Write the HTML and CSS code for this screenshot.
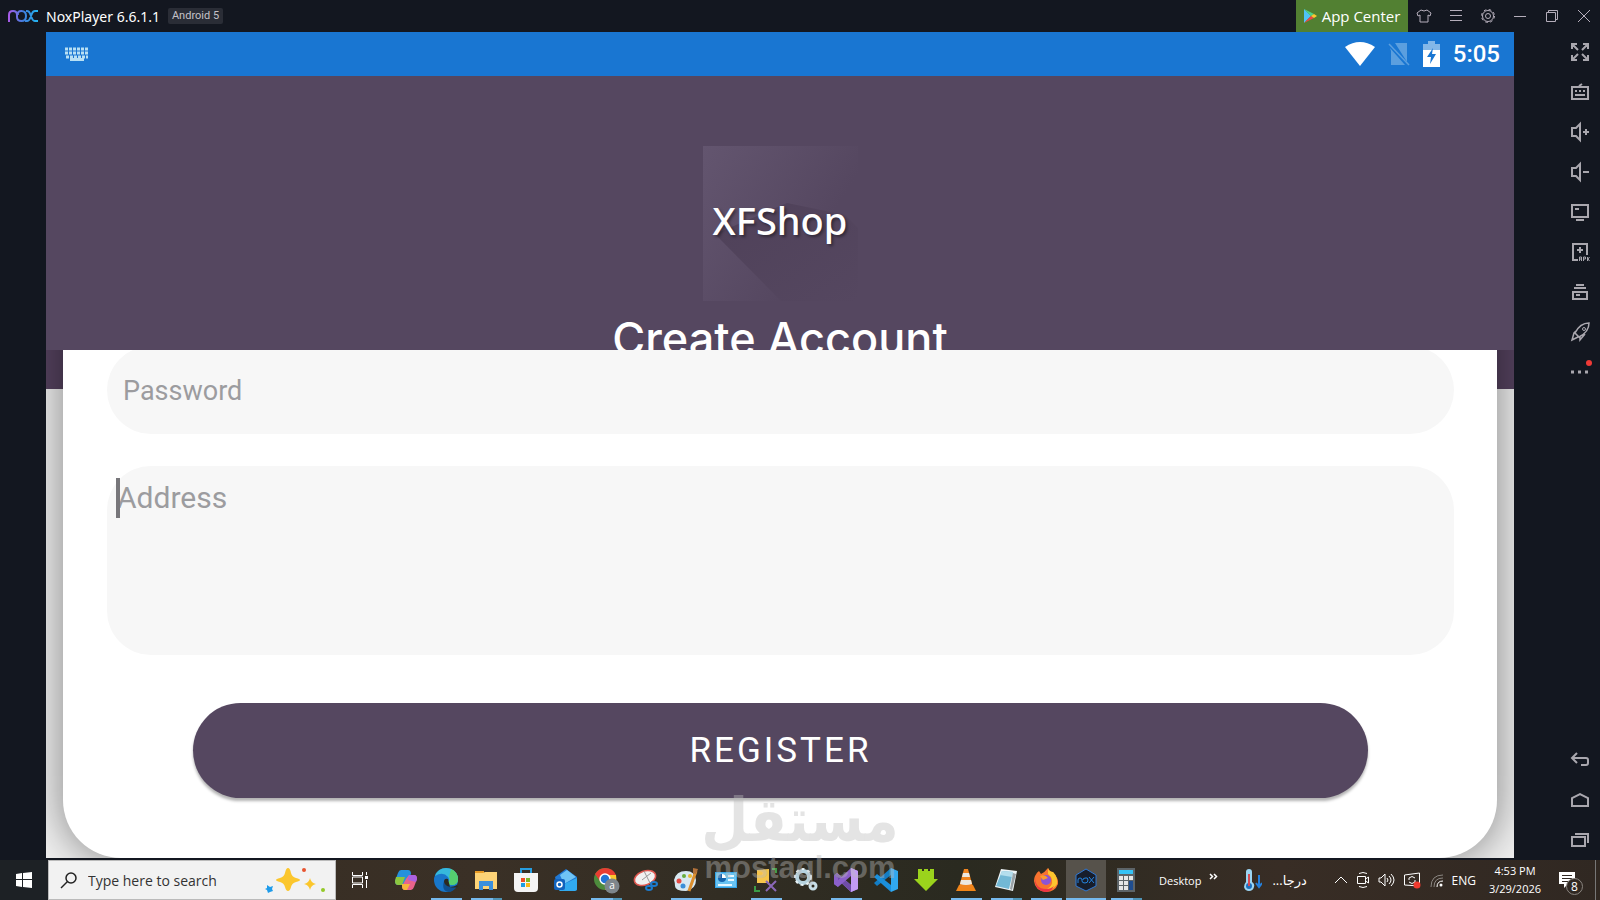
FILE: index.html
```
<!DOCTYPE html>
<html lang="en">
<head>
    <meta charset="UTF-8">
    <meta name="viewport" content="width=device-width, initial-scale=1.0">
    <title>NoxPlayer</title>
    <link rel="stylesheet" href="styles.css">
</head>
<body>
    <header class="titlebar">
        <svg class="nox-logo" width="30" height="12" viewBox="0 0 30 12">
            <defs>
                <linearGradient id="nox" x1="0" x2="1"><stop offset="0" stop-color="#a75be8"/><stop offset=".5" stop-color="#3f7fdd"/><stop offset="1" stop-color="#23b5f0"/></linearGradient>
            </defs>
            <path d="M1 12V5q0-4 4-4t4 4v2q0 4 4.500 4T18 6t-4.500-5T10 5M18 1h1q2 0 3 2.500l2 5q1 2.500 3 2.500h3M30 1h-3q-2 0-3 2.500l-2 5q-1 2.500-3 2.500h-2" fill="none" stroke="url(#nox)" stroke-width="2"/>
        </svg>
        <span class="app-name">NoxPlayer 6.6.1.1</span>
        <span class="version">Android 5</span>
        <button class="app-center">
            <svg width="13" height="14" viewBox="0 0 13 14"><path d="M0 0v14l7-7z" fill="#4fc3f7"/><path d="M0 0l10 5-3 2z" fill="#4cd38a"/><path d="M0 14l10-5-3-2z" fill="#ef4444"/><path d="M10 5l3 2-3 2-3-2z" fill="#fdc82f"/></svg>
            App Center
        </button>
        <button class="win-btn" aria-label="Theme"><svg width="16" height="14" viewBox="0 0 16 14"><path d="M5 1L1 4l1 3 2-1v7h8V6l2 1 1-3-4-3q-3 2-6 0z"/></svg></button>
        <button class="win-btn" aria-label="Menu"><svg width="12" height="12" viewBox="0 0 12 12"><path d="M0 .5h12M0 5.500h12M0 10.500h12"/></svg></button>
        <button class="win-btn" aria-label="Settings"><svg width="16" height="16" viewBox="0 0 16 16"><circle cx="8" cy="8" r="5.500"/><circle cx="8" cy="8" r="2.500"/><circle cx="8" cy="8" r="6.500" stroke-dasharray="2.600 2.500"/></svg></button>
        <button class="win-btn" aria-label="Minimize"><svg width="12" height="12" viewBox="0 0 12 12"><path d="M0 6.500h12"/></svg></button>
        <button class="win-btn" aria-label="Restore"><svg width="12" height="12" viewBox="0 0 12 12"><path d="M.5 2.500h9v9h-9zM2.500 2.500v-2h9v9h-2"/></svg></button>
        <button class="win-btn" aria-label="Close"><svg width="12" height="12" viewBox="0 0 12 12"><path d="M0 0l12 12M12 0L0 12"/></svg></button>
    </header>

    <div class="emulator">
        <main class="screen">
            <div class="status-bar">
                <svg width="26" height="14" viewBox="0 0 26 14" stroke="#b8e0f4" fill="none"><path d="M1 2h24M1 6h24M2 10h22" stroke-width="3" stroke-dasharray="3 1"/><path d="M6 12.500h14" stroke-width="3"/></svg>
                <div class="status-icons">
                    <svg width="30" height="24" viewBox="0 0 30 24"><path d="M0 5q15-10 30 0L15 24z" fill="#fff"/></svg>
                    <svg width="22" height="24" viewBox="0 0 22 24"><path d="M7 1h12v19zM2 6l15 17H3V9z" fill="#5b9fdf"/><path d="M1 2l20 21" stroke="#5b9fdf" stroke-width="1.500"/></svg>
                    <svg width="17" height="26" viewBox="0 0 17 26"><path d="M0 3h5V0h7v3h5v6H0z" fill="#83b7e8"/><path d="M0 9h17v17H0z" fill="#fff"/><path d="M10 7l-6 9h4l-1 7 6-10H9z" fill="#1976d2"/></svg>
                    <span class="time">5:05</span>
                </div>
            </div>
            <section class="hero">
                <div class="logo">
                    <svg width="155" height="155" viewBox="0 0 155 155">
                        <defs>
                            <linearGradient id="tile" x1="0" y1="0" x2=".8" y2=".5"><stop offset="0" stop-color="#63556f"/><stop offset="1" stop-color="#554760"/></linearGradient>
                            <linearGradient id="cast" x1="0" y1="0" x2="1" y2="1"><stop offset="0" stop-color="#4f4159"/><stop offset="1" stop-color="#554760"/></linearGradient>
                        </defs>
                        <path d="M0 0h155v155H0z" fill="url(#tile)"/>
                        <path d="M12 88L84 57l58 12 13 13v73H78z" fill="url(#cast)"/>
                    </svg>
                    <span class="logo-text">XFShop</span>
                </div>
                <h1>Create Account</h1>
            </section>
            <div class="form-area">
                <form class="card">
                    <input type="password" class="field" placeholder="Password" aria-label="Password">
                    <div class="address-wrap">
                        <textarea class="field address" placeholder="Address" aria-label="Address"></textarea>
                        <span class="caret"></span>
                    </div>
                    <button type="button" class="register">REGISTER</button>
                </form>
            </div>
        </main>

        <aside class="tools">
            <button aria-label="Full screen"><svg viewBox="0 0 18 18"><path d="M7 7L1 1M1 6V1h5M11 7l6-6M12 1h5v5M7 11l-6 6M1 12v5h5M11 11l6 6M17 12v5h-5"/></svg></button>
            <button aria-label="Keyboard"><svg viewBox="0 0 18 18"><path d="M1 4h16v12H1zM4 8h2M8 8h2M12 8h2M4 12h10M8 3l3-2"/></svg></button>
            <button aria-label="Volume up"><svg viewBox="0 0 18 18"><path d="M1 5h4l4-4v16l-4-4H1zM12 9h6M15 6v6"/></svg></button>
            <button aria-label="Volume down"><svg viewBox="0 0 18 18"><path d="M1 5h4l4-4v16l-4-4H1zM12 9h6"/></svg></button>
            <button aria-label="Screen"><svg viewBox="0 0 18 18"><path d="M1 2h16v12H1zM4 6h4M5 17h8"/></svg></button>
            <button aria-label="Install APK"><svg viewBox="0 0 18 18"><path d="M7 17H2V1h14v11M9 4v6M6 7h6"/><path d="M8.500 18v-4h2v4M8.500 16h2M12.500 18v-4h2v2h-2M16.500 14v4M18.500 14l-1.500 2 1.500 2" stroke-width="1"/></svg></button>
            <button aria-label="Multi window"><svg viewBox="0 0 18 18"><path d="M5 2h8M3 5h12M2 9h14v7H2zM5 12h4"/></svg></button>
            <button aria-label="Boost"><svg viewBox="0 0 18 18"><path d="M18 0q-9 0-14 10l4 4Q18 9 18 0zM5 8L3 10l-2 7 6-3M9 14v3l5-6" stroke-width="1.500"/><circle cx="13" cy="6" r="1.500" stroke-width="1"/></svg></button>
            <button aria-label="More" class="more"><svg viewBox="0 0 18 18"><path d="M0 9h3M7 9h3M14 9h3" stroke-width="3"/></svg></button>
            <button aria-label="Back" class="nav-back"><svg viewBox="0 0 18 18"><path d="M6 2L1 7l5 5M1 7h14q2 0 2 2v3q0 2-2 2h-5"/></svg></button>
            <button aria-label="Home"><svg viewBox="0 0 18 18"><path d="M1 15V7l8-4 8 4v8z"/></svg></button>
            <button aria-label="Recents"><svg viewBox="0 0 18 18"><path d="M1 6h13v9H1zM4 3h13v9"/></svg></button>
        </aside>
    </div>

    <footer class="taskbar">
        <button class="start" aria-label="Start"><svg width="16" height="16" viewBox="0 0 16 16" fill="#fff"><path d="M0 2l6-1v6H0zM7 1l9-1v7H7zM0 8h6v7l-6-1zM7 8h9v8l-9-1z"/></svg></button>
        <label class="search">
            <svg width="17" height="17" viewBox="0 0 17 17" fill="none" stroke="#222" stroke-width="1.500"><circle cx="11" cy="6" r="5"/><path d="M7.500 9.500L1 16"/></svg>
            <input type="text" placeholder="Type here to search">
            <svg width="62" height="26" viewBox="0 0 62 26"><path d="M24 1q2 0 3 5 1 4 5 5 4 1 4 2t-4 2q-4 1-5 5-1 4-3 4t-3-4q-1-4-5-5-4-1-4-2t4-2q4-1 5-5 1-5 3-5z" fill="#fbc62c"/><path d="M46 11q1 5 6 6-5 1-6 6-1-5-6-6 5-1 6-6z" fill="#fbc62c"/><path d="M3 18l3 2 3-1-1 3 1 2-3 1-2 1-1-3-2-1 2-1z" fill="#1e9bea"/><circle cx="40" cy="3" r="2" fill="#e8532f"/><circle cx="59" cy="23" r="2" fill="#94c928"/></svg>
        </label>
        <button class="task-view" aria-label="Task view"><svg width="18" height="16" viewBox="0 0 18 16" fill="none" stroke="#fff"><path d="M1.500 0v3.500h10V0M1.500 16v-3.500h10V16M1.500 5v6h10V5zM15.500 0v3M15.500 8v8"/><path d="M14 5.500h3" stroke-width="3"/></svg></button>

        <nav class="apps">
            <button aria-label="Copilot"><svg viewBox="0 0 24 24"><path d="M7 2h7q3 0 3 4l-4 7-4 4H4q-3 0-3-4l3-8q1-3 3-3z" fill="#2591dc"/><path d="M2 9h9l-3 8H4q-3 0-3-4z" fill="#8dc63f"/><path d="M15 7h5q3 0 3 4l-3 8q-1 3-3 3h-6q-3 0-3-4l4-7z" fill="#e8638c"/><path d="M15 7h5q3 0 3 4l-1 3-8-2z" fill="#aa61e0"/><path d="M8 16h8l-3 6h-2q-3 0-3-4z" fill="#f7b43c"/></svg></button>
            <button class="running" aria-label="Edge"><svg viewBox="0 0 24 24"><circle cx="12" cy="12" r="12" fill="#1877cb"/><path d="M1 8Q4 0 12 0q9 0 12 9 1 7-6 8-4 0-4-3 2-2 0-5Q9 3 1 8z" fill="#36b9dc"/><path d="M17 1q7 3 7 10 0 6-6 6-4 0-4-3 3-2 1-5z" fill="#55cf6f"/><path d="M10 13q2 8 13 5-2 4-7 6-9 0-6-11z" fill="#10508f"/><path d="M14 11q-4-1-4 3 1 4 6 5 4 0 7-2l1 2q-4 1-8 0z" fill="#2d2920"/></svg></button>
            <button class="running multi" aria-label="File Explorer"><svg viewBox="0 0 24 24"><path d="M1 3h9v4H1z" fill="#e99b25"/><path d="M1 5h8l2-1h12v17H1z" fill="#fdd377"/><path d="M5 13h14v9h-4v-4H9v4H5z" fill="#3b8fdc"/></svg></button>
            <button aria-label="Store"><svg viewBox="0 0 24 24"><path d="M7 6V1h10v5" fill="none" stroke="#279ee0" stroke-width="2"/><path d="M0 5h24v15q0 4-4 4H4q-4 0-4-4z" fill="#f4f4f4"/><path d="M7 10h4v4H7z" fill="#f04e25"/><path d="M12 10h4v4h-4z" fill="#7db928"/><path d="M7 15h4v4H7z" fill="#1d9de5"/><path d="M12 15h4v4h-4z" fill="#fbb917"/></svg></button>
            <button aria-label="Outlook"><svg viewBox="0 0 24 24"><path d="M1 9l11-8 11 8v13H4z" fill="#2078d4"/><path d="M6 7l7-5 9 7-12 7z" fill="#6fc4f5"/><path d="M10 16l13-6v11q0 2-2 2H5z" fill="#31aaf0"/><rect y="11" width="11" height="11" rx="2" fill="#1263bd"/><circle cx="5.500" cy="16.500" r="2.500" fill="none" stroke="#fff" stroke-width="1.500"/></svg></button>
            <button class="running multi" aria-label="Chrome"><svg viewBox="0 0 24 24"><circle cx="11" cy="11" r="11" fill="#4d8b3c"/><path d="M1 6q4-6 10-6 8 0 11 7H11l-5 6z" fill="#e83c32"/><path d="M11 7h11q2 9-5 13l-6 2 5-8z" fill="#fbc72d"/><circle cx="11" cy="11" r="5" fill="#2374d6" stroke="#fff" stroke-width="1.500"/><circle cx="18" cy="18" r="7.500" fill="#7e868c"/><text x="18" y="21" text-anchor="middle" font-size="10" fill="#fff">a</text></svg></button>
            <button aria-label="Snipping Tool"><svg viewBox="0 0 24 24"><ellipse cx="11" cy="10" rx="11" ry="7" transform="rotate(-20 11 10)" fill="#f1f1f1" stroke="#df5850" stroke-width="1.500"/><path d="M10 3l6 12M17 5l-9 7" stroke="#999"/><g fill="none" stroke="#1c7bce" stroke-width="2"><ellipse cx="15" cy="20" rx="3" ry="2"/><ellipse cx="20" cy="16" rx="3" ry="2"/></g></svg></button>
            <button class="running" aria-label="Paint"><svg viewBox="0 0 24 24"><path d="M12 3q9 0 10 9 0 9-10 11Q1 23 1 18q0-3-1-6Q2 3 12 3z" fill="#d8e8f1"/><circle cx="5" cy="13" r="2.500" fill="#e44a44"/><circle cx="10" cy="8" r="2" fill="#68ad3c"/><circle cx="16" cy="8" r="2" fill="#e8ba35"/><circle cx="9" cy="18" r="2.500" fill="#3a8ed8"/><path d="M22 3l-7 20" stroke="#dc8f2e" stroke-width="3"/><path d="M19 0l5 1-2 5-3-1z" fill="#b2713a"/></svg></button>
            <button aria-label="Control Panel"><svg viewBox="0 0 24 24"><path d="M1 4h22v16H1z" fill="#34a5ea"/><path d="M2 5h20v14H2z" fill="#69c3f2"/><circle cx="8" cy="10" r="4" fill="#1464ad"/><path d="M8 10V6q4 0 4 4z" fill="#fff"/><path d="M14 8h6M14 12h6M4 17h14" stroke="#e8f8ff" stroke-width="2"/></svg></button>
            <button class="running" aria-label="Tools"><svg viewBox="0 0 24 24"><path d="M3 2l12-1v14H3z" fill="#f6c54b"/><path d="M18 1h4v4M1 18v5h5" fill="none" stroke="#3b9c48" stroke-width="2"/><path d="M12 13l10 10M22 13L12 23" stroke="#8b68b8" stroke-width="2"/></svg></button>
            <button aria-label="Services"><svg viewBox="0 0 24 24" fill="none"><circle cx="9" cy="9" r="6" stroke="#b6d3df" stroke-width="4"/><circle cx="9" cy="9" r="8" stroke="#e8f4f8" stroke-width="2" stroke-dasharray="3 3"/><circle cx="19" cy="18" r="3" stroke="#c9dfe8" stroke-width="3"/></svg></button>
            <button class="running" aria-label="Visual Studio"><svg viewBox="0 0 24 24"><path d="M17 0l7 3v18l-7 3L0 8l3-3 14 12z" fill="#a87be0"/><path d="M0 7l3-2 14 12V24L0 8z" fill="#6f4ca8"/><path d="M0 7l4 3v9l-4-3z" fill="#8b60cb"/><path d="M0 16L17 0v8L4 19l-4-3z" fill="#8b60cb"/><path d="M17 0l7 3v18l-7 3z" fill="#c39bf5"/></svg></button>
            <button aria-label="VS Code"><svg viewBox="0 0 24 24"><path d="M0 15L17 0v7L3 18z" fill="#137dc4"/><path d="M0 9l3-3 14 11v7z" fill="#1b8fdc"/><path d="M17 0l7 3v18l-7 3z" fill="#31a8ef"/></svg></button>
            <button aria-label="Downloader"><svg viewBox="0 0 24 24"><path d="M4 1h4v2h2V1h4v2h2V1h4v10h4L12 23 0 11h4z" fill="#9bd31c"/></svg></button>
            <button class="running" aria-label="VLC"><svg viewBox="0 0 24 24"><path d="M5 17h14l3 6H2z" fill="#f18518"/><path d="M10 1h4l5 18q-7 3-14 0z" fill="#f08520"/><path d="M9 5h6l1 4H8zM7 12h10l1 4q-6 2-12 0z" fill="#ece8e0"/></svg></button>
            <button class="running multi" aria-label="Notepad"><svg viewBox="0 0 24 24"><path d="M7 1l16 2-4 20-18-4z" fill="#eef4f6"/><path d="M8 3l11 1-4 17-13-3z" fill="#72b8d5"/><path d="M8 3l11 1-1 5L6 7z" fill="#b4deed"/><path d="M19 5l3 1-4 16-2-1z" fill="#9aa2a6"/></svg></button>
            <button class="running" aria-label="Firefox"><svg viewBox="0 0 24 24"><path d="M1 8q2-4 4-5l2 3q4-2 7-6 2 4 5 4 6 7 5 12-3 8-12 8Q1 23 0 13q0-3 1-5z" fill="#f8732f"/><path d="M14 0q1 4 5 4 5 5 4 12-4 7-10 5 6-3 5-9-1-4-4-6z" fill="#fdc52e"/><path d="M1 9q0 12 11 12 5 0 8-3-3 6-9 6Q0 22 1 9z" fill="#ed3445"/><circle cx="12" cy="12" r="5" fill="#8c54d5"/><path d="M6 8q5-2 8 2l-5 2z" fill="#fb9c2e"/></svg></button>
            <button class="running active" aria-label="Nox"><svg viewBox="0 0 24 24"><path d="M12 1l10 6v11l-10 5-10-5V7z" fill="#171d2b" stroke="#2f78d4"/><path d="M4 15v-3q0-2 2-2t2 2v1q0 2 3 2t3-3-3-2-2 2M15 9l5 6M20 9l-5 6" fill="none" stroke="#2484df"/></svg></button>
            <button class="running multi" aria-label="Calculator"><svg viewBox="0 0 24 24"><path d="M3 0h18v24H3z" fill="#5d6468"/><path d="M5 2h14v4H5z" fill="#35c2f5"/><path d="M5 8h4v4H5zM10 8h4v4h-4zM15 8h4v4h-4zM5 13h4v4H5zM10 13h4v4h-4zM5 18h4v4H5zM10 18h4v4h-4z" fill="#e7e7e7"/><path d="M15 13h4v9h-4z" fill="#1f4d8f"/></svg></button>
        </nav>

        <div class="desktop-bar"><span>Desktop</span><svg width="9" height="7" viewBox="0 0 9 7" fill="none" stroke="#fff" stroke-width="1.500"><path d="M1 1l2.500 2.500L1 6M5 1l2.500 2.500L5 6"/></svg></div>
        <div class="weather">
            <svg width="18" height="24" viewBox="0 0 18 24"><path d="M2 4q0-3 3-3t3 3v10q3 2 2 5-1 4-5 4t-5-4q0-3 2-5z" fill="#9bd5f3"/><circle cx="5" cy="18" r="3" fill="#1c6fbd"/><path d="M5 6v12" stroke="#d64b55" stroke-width="2"/><path d="M15 7v11M12 15l3 4 3-4" fill="none" stroke="#2580dc" stroke-width="2"/></svg>
            <span lang="ar" dir="rtl">درجا...</span>
        </div>
        <div class="tray">
            <svg width="14" height="8" viewBox="0 0 14 8"><path d="M1 7l6-6 6 6"/></svg>
            <svg width="12" height="16" viewBox="0 0 12 16"><path d="M.5 4.500h8v7h-8zM8.500 7l3-2v6l-3-2M2 1.500q4-2 8 0M2 14.500q4 2 8 0"/></svg>
            <svg width="17" height="14" viewBox="0 0 17 14"><path d="M1 5h2l4-4v12L3 9H1zM9 5q2 2 0 4M11 3q4 4 0 8M13 1q6 6 0 12"/></svg>
            <svg width="17" height="17" viewBox="0 0 17 17"><path d="M.5 3L15.500 1v13L.5 13zM5 8V6q3-3 6 0M11 8v2q-3 3-6 0"/><circle cx="13" cy="13" r="3.500" fill="#f03a2e" stroke="none"/></svg>
            <svg width="13" height="13" viewBox="0 0 13 13"><g stroke="#8a8580"><path d="M1 13Q1 1 13 1M4 13q0-9 9-9"/></g><path d="M7 13q0-6 6-6"/><circle cx="11" cy="11" r="1.500" fill="#fff" stroke="none"/></svg>
            <span>ENG</span>
        </div>
        <div class="clock"><span>4:53 PM</span><span>3/29/2026</span></div>
        <button class="notifications" aria-label="Notifications">
            <svg width="16" height="16" viewBox="0 0 16 16"><path d="M0 0h16v12H9l-4 4v-4H0z" fill="#fff"/><path d="M3 3.500h10M3 6.500h10M3 9.500h7" stroke="#302822"/></svg>
            <span class="badge">8</span>
        </button>
    </footer>

    <div class="watermark">
        <span class="watermark-ar" lang="ar" dir="rtl">مستقل</span>
        <span class="watermark-en">mostaql.com</span>
    </div>
</body>
</html>
```
FILE: styles.css
```
* {
    margin: 0;
    padding: 0;
    box-sizing: border-box;
}
body {
    display: flex;
    flex-direction: column;
    height: 100vh;
    overflow: hidden;
    background-color: #131720;
    color: #fff;
    font-family: 'Open Sans', 'Noto Sans', 'DejaVu Sans', sans-serif;
    font-size: 12px;
}
button {
    display: flex;
    align-items: center;
    justify-content: center;
    background: none;
    border: none;
    color: inherit;
    font-family: inherit;
}
svg {
    flex-shrink: 0;
}

/* title bar */
.titlebar {
    display: flex;
    align-items: center;
    height: 32px;
    padding-left: 8px;
}
.app-name {
    margin-left: 8px;
    font-family: 'Noto Sans', sans-serif;
    font-size: 14px;
}
.version {
    margin-left: 8px;
    padding: 0 4px;
    border-radius: 2px;
    background-color: #2a2d36;
    color: #c4c2c8;
    font-family: Roboto, sans-serif;
    font-size: 11px;
    line-height: 16px;
}
.app-center {
    width: 112px;
    height: 32px;
    margin-left: auto;
    gap: 5px;
    background-color: #528032;
    font-size: 15px;
}
.win-btn {
    width: 32px;
    height: 32px;
}
.win-btn svg {
    fill: none;
    stroke: #b5aebb;
}

/* emulator */
.emulator {
    display: flex;
    flex: 1;
    min-height: 0;
}
.screen {
    display: flex;
    flex-direction: column;
    flex: 1;
    margin: 0 0 2px 46px;
    background-color: #554760;
}
.status-bar {
    display: flex;
    align-items: center;
    justify-content: space-between;
    height: 44px;
    padding: 0 14px 0 18px;
    background-color: #1976d2;
}
.status-icons {
    display: flex;
    align-items: center;
    gap: 13px;
}
.time {
    font-family: Roboto, sans-serif;
    font-size: 24px;
    font-weight: 500;
}
.hero {
    display: flex;
    flex-direction: column;
    align-items: center;
    height: 274px;
    padding-top: 70px;
    overflow: hidden;
}
.logo {
    position: relative;
    height: 155px;
}
.logo-text {
    position: absolute;
    inset: 0;
    font-family: 'Noto Sans', sans-serif;
    font-size: 38px;
    font-weight: 500;
    line-height: 148px;
    text-align: center;
    text-shadow: 2px 2px 3px rgba(0,0,0,0.4);
}
.hero h1 {
    margin-top: 12px;
    font-family: Inter, sans-serif;
    font-size: 45px;
    font-weight: 500;
    line-height: 52px;
    white-space: nowrap;
}
.form-area {
    flex: 1;
    min-height: 0;
    overflow: hidden;
    background: linear-gradient(#55425f 39px, #f0f0f0 39px);
}
.card {
    height: calc(100% + 60px);
    margin: -60px 17px 0;
    padding: 56px 43px 0 44px;
    border-radius: 0 0 58px 58px;
    background-color: #fff;
    box-shadow: 0 0 40px 4px rgba(0,0,0,0.4);
}
.field {
    display: block;
    width: 100%;
    height: 88px;
    padding: 2px 16px 0;
    border: none;
    border-radius: 44px;
    outline: none;
    background-color: #f7f7f7;
    font-family: Roboto, sans-serif;
    font-size: 27px;
}
.field::placeholder {
    color: #9c9c9f;
}
.address-wrap {
    position: relative;
    margin-top: 32px;
}
.address {
    height: 189px;
    padding: 12px 10px;
    font-size: 30px;
    line-height: 40px;
    resize: none;
}
.caret {
    position: absolute;
    top: 12px;
    left: 9px;
    width: 4px;
    height: 40px;
    background-color: #77767a;
}
.register {
    width: calc(100% - 172px);
    height: 95px;
    margin: 48px auto 0;
    border-radius: 48px;
    background-color: #554760;
    box-shadow: 0 3px 3px rgba(0,0,0,0.3);
    font-family: Roboto, sans-serif;
    font-size: 35px;
    letter-spacing: 3px;
}

/* emulator tools */
.tools {
    display: flex;
    flex-direction: column;
    align-items: flex-end;
    width: 86px;
}
.tools button {
    position: relative;
    width: 40px;
    height: 40px;
}
.tools svg {
    width: 18px;
    height: 18px;
    overflow: visible;
    fill: none;
    stroke: #a9a7ae;
    stroke-width: 2;
}
.tools .more::after {
    content: '';
    position: absolute;
    top: 8px;
    right: 8px;
    width: 6px;
    height: 6px;
    border-radius: 50%;
    background-color: #f03a36;
}
.tools .nav-back {
    margin-top: auto;
}

/* taskbar */
.taskbar {
    display: flex;
    align-items: center;
    height: 40px;
    background: linear-gradient(90deg, #352c22, #3a3026 30%, #2a2a20 60%, #382d25 80%, #302822);
}
.start {
    width: 48px;
    height: 40px;
    background-color: #1d2125;
}
.search {
    display: flex;
    align-items: center;
    width: 288px;
    height: 40px;
    padding: 0 9px 0 11px;
    border: 1px solid #bbb;
    background-color: #f2f2f2;
}
.search input {
    flex: 1;
    min-width: 0;
    margin-left: 11px;
    border: none;
    outline: none;
    background: none;
    font-family: inherit;
    font-size: 14px;
}
.search input::placeholder {
    color: #333;
}
.task-view {
    width: 48px;
    height: 40px;
}
.apps {
    display: flex;
    margin-left: 2px;
}
.apps button {
    position: relative;
    width: 40px;
    height: 40px;
}
.apps svg {
    width: 24px;
    height: 24px;
    overflow: visible;
}
.apps .running::after {
    content: '';
    position: absolute;
    bottom: 0;
    left: 5px;
    width: 31px;
    height: 2px;
    background-color: #76b9ed;
}
.apps .multi::after {
    background: linear-gradient(90deg, #76b9ed 22px, #4f93b5 22px);
}
.apps .active {
    background-color: #56524b;
}
.apps .active::after {
    left: 0;
    width: 40px;
}
.desktop-bar {
    display: flex;
    gap: 8px;
    margin-left: 13px;
    font-size: 11px;
}
.weather {
    display: flex;
    align-items: center;
    gap: 10px;
    margin-left: 26px;
    font-size: 13px;
}
.tray {
    display: flex;
    align-items: center;
    gap: 9px;
    margin-left: auto;
}
.tray svg {
    fill: none;
    stroke: #fff;
}
.clock {
    display: flex;
    flex-direction: column;
    align-items: center;
    width: 78px;
    line-height: 18px;
    font-size: 11px;
}
.notifications {
    position: relative;
    width: 42px;
    height: 40px;
    margin-right: 4px;
    border-right: 1px solid #777;
    justify-content: flex-start;
    padding-left: 5px;
}
.badge {
    position: absolute;
    top: 18px;
    left: 12px;
    width: 17px;
    height: 17px;
    border: 1px solid #8a8580;
    border-radius: 50%;
    background-color: #302822;
    font-size: 12px;
    line-height: 15px;
}

.watermark {
    position: absolute;
    bottom: 16px;
    left: 50%;
    display: flex;
    flex-direction: column;
    align-items: center;
    width: 192px;
    margin-left: -96px;
    color: #bcbcbc;
    opacity: 0.4;
    pointer-events: none;
}
.watermark-ar {
    font-family: 'DejaVu Sans Condensed', 'DejaVu Sans', sans-serif;
    font-size: 60px;
    font-weight: bold;
    line-height: 64px;
}
.watermark-en {
    font-family: 'Liberation Sans', sans-serif;
    font-size: 31px;
    font-weight: bold;
    line-height: 32px;
}
```
